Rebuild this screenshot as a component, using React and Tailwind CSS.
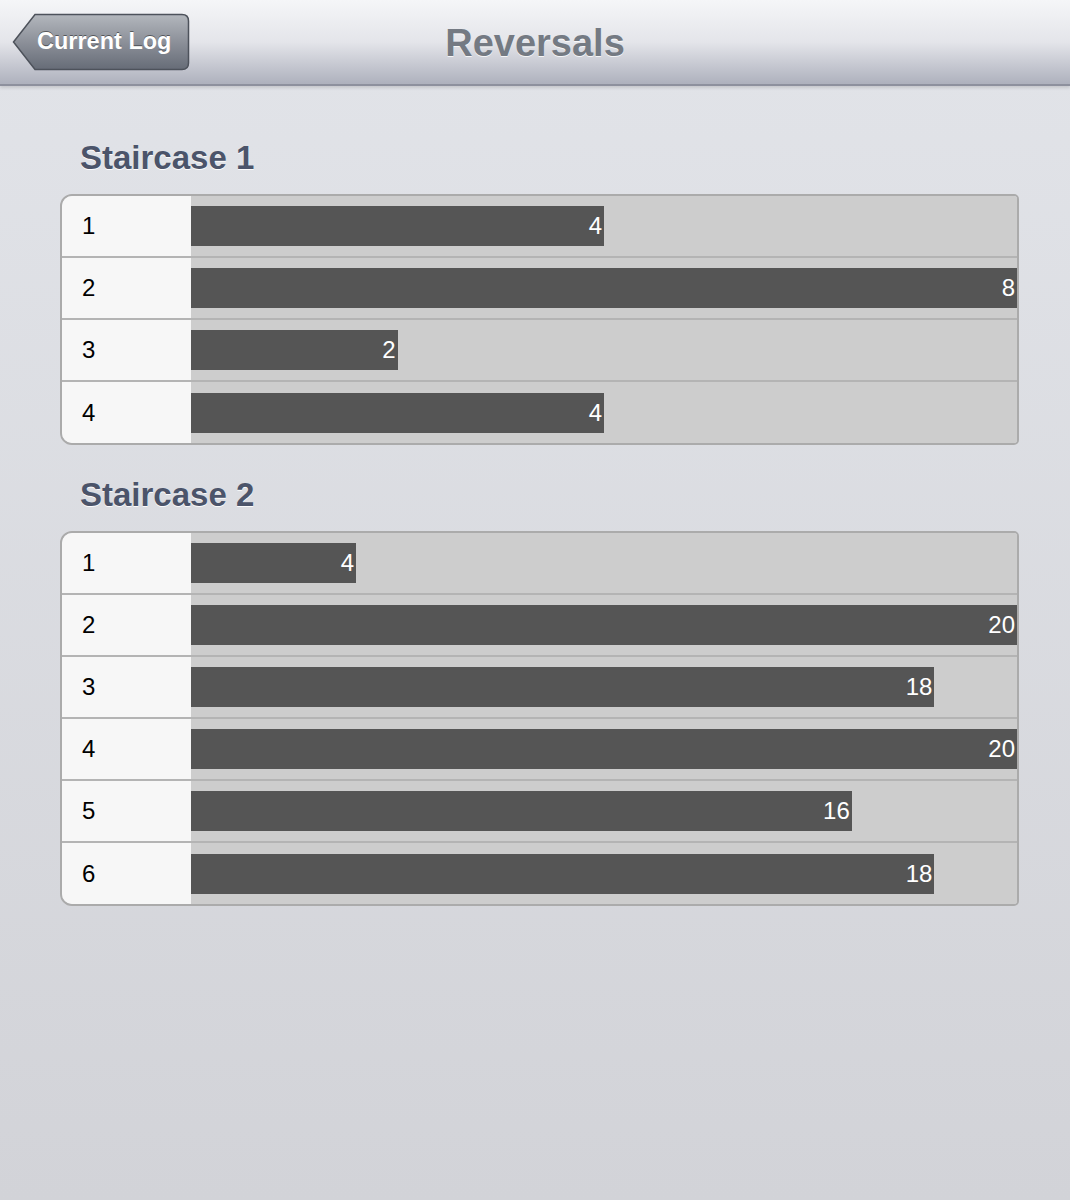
const staircases = [
  { title: 'Staircase 1', values: [4, 8, 2, 4] },
  { title: 'Staircase 2', values: [4, 20, 18, 20, 16, 18] },
];

function BackButton() {
  return (
    <button className="relative h-[58px] w-[178px] shrink-0 text-left">
      <svg className="absolute inset-0" width="178" height="58" viewBox="0 0 178 58">
        <defs>
          <linearGradient id="btn" x1="0" y1="0" x2="0" y2="1">
            <stop offset="0" stopColor="#b3b7bd" />
            <stop offset="0.5" stopColor="#8c9099" />
            <stop offset="1" stopColor="#666c77" />
          </linearGradient>
        </defs>
        <path
          d="M1.5 29 L23 1.5 H170 Q176.5 1.5 176.5 8 V50 Q176.5 56.5 170 56.5 H23 Z"
          fill="url(#btn)"
          stroke="#4d525b"
          strokeWidth="1.5"
        />
      </svg>
      <span className="relative block pl-[25px] text-[23.5px] font-bold text-white [text-shadow:0_-1px_0_rgba(0,0,0,0.45)]">
        Current Log
      </span>
    </button>
  );
}

function Table({ values }) {
  const max = Math.max(...values);
  return (
    <div className="w-[959px] rounded-l-[12px] rounded-r-[5px] border-2 border-[#ababab] overflow-hidden">
      {values.map((v, i) => {
        const last = i === values.length - 1;
        return (
          <div
            key={i}
            className={last ? 'flex h-[61px]' : 'flex h-[62px] border-b-2 border-[#b4b4b4]'}
          >
            <div className="w-[129px] bg-[#f7f7f7] flex items-center pl-[20px] text-[24px] text-black">
              {i + 1}
            </div>
            <div className="flex-1 bg-[#cdcdcd] flex items-center">
              <div
                className="h-[40px] bg-[#555555] flex items-center justify-end pr-[2px] text-[24px] text-white"
                style={{ width: `${(v / max) * 100}%` }}
              >
                {v}
              </div>
            </div>
          </div>
        );
      })}
    </div>
  );
}

export default function App() {
  return (
    <div className="min-h-[1200px] w-[1070px] bg-gradient-to-b from-[#e2e4e9] to-[#d2d3d8] font-['Liberation_Sans',Arial,sans-serif]">
      <header className="relative flex h-[86px] items-center border-b-2 border-[#8e919e] bg-gradient-to-b from-[#f5f6f8] via-[#e4e5ea] to-[#aeb1bd] px-[12px] shadow-[0_2px_3px_rgba(0,0,0,0.12)]">
        <BackButton />
        <h1 className="absolute left-0 right-0 top-[15px] text-center text-[38px] font-bold text-[#747a83] [text-shadow:0_1px_0_rgba(255,255,255,0.8)] pointer-events-none">
          Reversals
        </h1>
      </header>
      <main className="pl-[60px] pt-[54px]">
        {staircases.map((s, idx) => (
          <section key={s.title} className={idx > 0 ? 'mt-[32px]' : ''}>
            <h2 className="pl-[20px] h-[36px] leading-[36px] text-[33px] font-bold text-[#4b546a] [text-shadow:0_1px_0_rgba(255,255,255,0.9)] mb-[18px]">
              {s.title}
            </h2>
            <Table values={s.values} />
          </section>
        ))}
      </main>
    </div>
  );
}
